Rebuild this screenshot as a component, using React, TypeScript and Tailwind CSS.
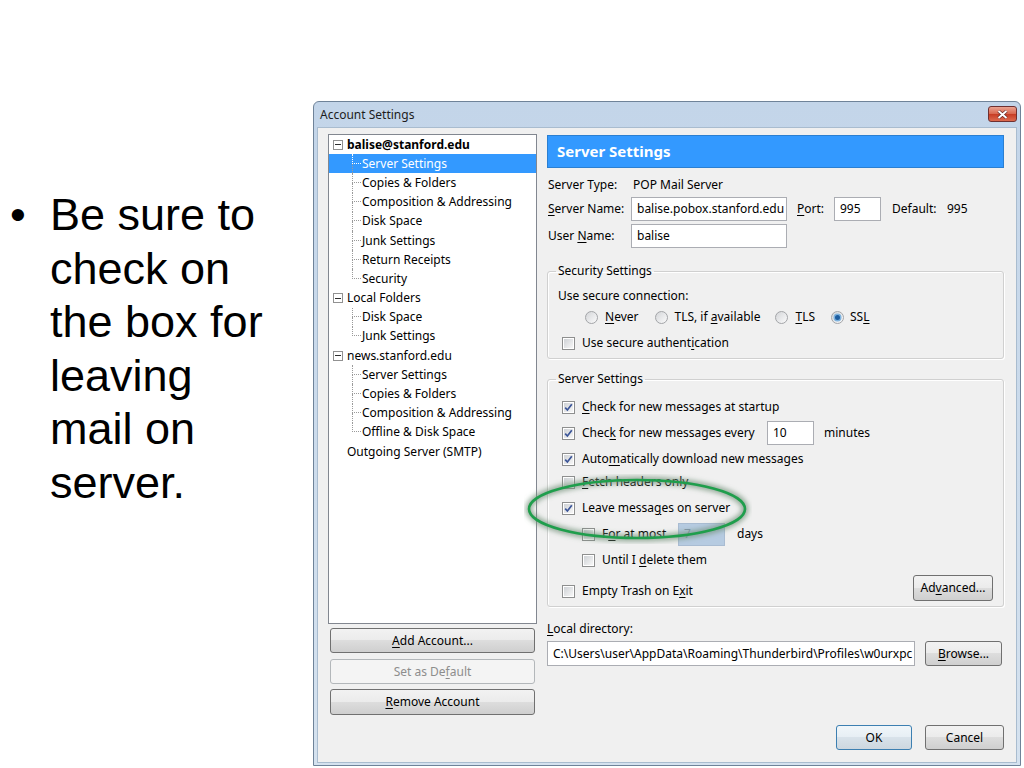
import React from "react";

type Node = { t: string; lvl: 0 | 1; box?: boolean; bold?: boolean; sel?: boolean; last?: boolean };

const tree: Node[] = [
  { t: "balise@stanford.edu", lvl: 0, box: true, bold: true },
  { t: "Server Settings", lvl: 1, sel: true },
  { t: "Copies & Folders", lvl: 1 },
  { t: "Composition & Addressing", lvl: 1 },
  { t: "Disk Space", lvl: 1 },
  { t: "Junk Settings", lvl: 1 },
  { t: "Return Receipts", lvl: 1 },
  { t: "Security", lvl: 1, last: true },
  { t: "Local Folders", lvl: 0, box: true },
  { t: "Disk Space", lvl: 1 },
  { t: "Junk Settings", lvl: 1, last: true },
  { t: "news.stanford.edu", lvl: 0, box: true },
  { t: "Server Settings", lvl: 1 },
  { t: "Copies & Folders", lvl: 1 },
  { t: "Composition & Addressing", lvl: 1 },
  { t: "Offline & Disk Space", lvl: 1, last: true },
  { t: "Outgoing Server (SMTP)", lvl: 0 },
];

function Box({ on }: { on?: boolean }) {
  return (
    <span className="w-[13px] h-[13px] shrink-0 border border-[#8e8f8f] bg-white p-[1px] flex">
      <span className="flex-1 flex items-center justify-center bg-gradient-to-br from-[#cfd2d6] to-[#f7f7f7]">
        {on && (
          <svg width="9" height="9" viewBox="0 0 9 9">
            <path d="M1.2 4.6 L3.4 7 L7.8 1.3" stroke="#3b5598" strokeWidth="1.7" fill="none" />
          </svg>
        )}
      </span>
    </span>
  );
}

function Radio({ on }: { on?: boolean }) {
  return (
    <span className="w-[13px] h-[13px] shrink-0 rounded-full border border-[#a3a5a8] bg-gradient-to-br from-[#d4d6d9] to-[#fbfbfb] flex items-center justify-center">
      {on && <span className="w-[5px] h-[5px] rounded-full bg-[#1d5d9f] ring-[1.5px] ring-[#7fb3de]" />}
    </span>
  );
}

function Btn({ children, def, disabled, className = "" }: { children: React.ReactNode; def?: boolean; disabled?: boolean; className?: string }) {
  const look = disabled
    ? "border-[#b3b7ba] bg-[#f4f4f4] text-[#8d8d8d]"
    : def
    ? "border-[#3c7fb1] bg-[linear-gradient(#f0f6fa,#e6eef4_50%,#d8e2ea_50%,#cdd7df)]"
    : "border-[#707070] bg-[linear-gradient(#f2f2f2,#ebebeb_50%,#dddddd_50%,#cfcfcf)]";
  return <div className={`flex items-center justify-center rounded-[3px] border ${look} ${className}`}>{children}</div>;
}

function Field({ children, className = "" }: { children?: React.ReactNode; className?: string }) {
  return <div className={`h-[24px] flex items-center px-[5px] border border-[#abadb3] bg-white ${className}`}>{children}</div>;
}

function U({ children }: { children: React.ReactNode }) {
  return <span className="underline decoration-1 underline-offset-[2px]">{children}</span>;
}

function TreeRow({ n }: { n: Node }) {
  return (
    <div className={`h-[19.2px] flex items-center ${n.sel ? "bg-[#3399ff] text-white" : ""}`}>
      {n.lvl === 0 ? (
        <>
          <span className="w-[14px] shrink-0 flex justify-end">
            {n.box && (
              <span className="w-[10px] h-[10px] border border-[#919191] bg-white flex items-center justify-center">
                <span className="w-[6px] h-[1px] bg-[#2e2e2e]" />
              </span>
            )}
          </span>
          <span className={`ml-[4px] ${n.bold ? "font-bold" : ""}`}>{n.t}</span>
        </>
      ) : (
        <>
          <span className="w-[23px] shrink-0" />
          <span className="w-[9px] h-full shrink-0 flex flex-col">
            <span className={`h-1/2 border-l border-b border-dotted ${n.sel ? "border-white" : "border-[#9a9a9a]"}`} />
            <span className={`h-1/2 ${n.last ? "" : "border-l border-dotted border-[#9a9a9a]"}`} />
          </span>
          <span className="ml-[1px]">{n.t}</span>
        </>
      )}
    </div>
  );
}

function CheckRow({ on, children, className = "" }: { on?: boolean; children: React.ReactNode; className?: string }) {
  return (
    <div className={`h-[20px] flex items-center gap-[7px] ${className}`}>
      <Box on={on} />
      {children}
    </div>
  );
}

export default function App() {
  return (
    <div className="relative w-[1024px] h-[768px] bg-white flex overflow-hidden">
      <div className="w-[313px] shrink-0 pt-[188px] flex font-['Liberation_Sans',Arial,sans-serif] text-[45px] leading-[53.5px] text-black">
        <span className="w-[50px] pl-[10px] shrink-0">•</span>
        <div>
          Be sure to<br />check on<br />the box for<br />leaving<br />mail on<br />server.
        </div>
      </div>

      <div className="mt-[101px] w-[708px] h-[665px] shrink-0 flex flex-col rounded-t-[6px] border border-[#6f8399] bg-gradient-to-b from-[#c3d5e9] to-[#d5e2ef] font-['Noto_Sans',sans-serif] text-[12px] text-black">
        <div className="h-[25px] shrink-0 flex items-start justify-between">
          <span className="pl-[6px] pt-[4px] text-[12px] text-[#1d1d1d]">Account Settings</span>
          <div className="mt-[4px] mr-[3px] w-[29px] h-[16px] rounded-[3px] border border-[#6f3030] bg-[linear-gradient(#eba391,#d8664d_50%,#c63b22_50%,#dc6a4f)] flex items-center justify-center">
            <svg width="11" height="9" viewBox="0 0 11 9">
              <path d="M1.5 1 L9.5 8 M9.5 1 L1.5 8" stroke="#5a2020" strokeWidth="3.2" />
              <path d="M1.5 1 L9.5 8 M9.5 1 L1.5 8" stroke="#ffffff" strokeWidth="2" />
            </svg>
          </div>
        </div>

        <div className="flex-1 mx-[3px] mb-[2px] bg-[#f0f0f0] border border-[#a9bccf] flex pl-[10px] pr-[12px] pt-[6px]">
          <div className="w-[209px] shrink-0 flex flex-col">
            <div className="h-[490px] border border-[#828790] bg-white overflow-hidden">
              {tree.map((n, i) => (
                <TreeRow key={i} n={n} />
              ))}
            </div>
            <Btn className="mt-[4px] h-[25px] mx-[2px]">
              <U>A</U>dd Account...
            </Btn>
            <Btn disabled className="mt-[6px] h-[25px] mx-[2px]">
              Set as De<U>f</U>ault
            </Btn>
            <Btn className="mt-[5px] h-[26px] mx-[2px]">
              <U>R</U>emove Account
            </Btn>
          </div>

          <div className="ml-[10px] w-[457px] flex flex-col">
            <div className="mt-[1px] h-[33px] bg-[#3399ff] border border-[#2b7fd1] flex items-center pl-[9px] text-white font-bold text-[15px]">
              Server Settings
            </div>

            <div className="mt-[7px] h-[20px] flex items-center">
              <span className="w-[86px] pl-[1px]">Server Type:</span>
              <span>POP Mail Server</span>
            </div>
            <div className="mt-[2px] h-[24px] flex items-center">
              <span className="w-[84px] pl-[1px]"><U>S</U>erver Name:</span>
              <Field className="w-[156px]">balise.pobox.stanford.edu</Field>
              <span className="ml-[10px] w-[37px]"><U>P</U>ort:</span>
              <Field className="w-[47px]">995</Field>
              <span className="ml-[11px] w-[55px]">Default:</span>
              <span>995</span>
            </div>
            <div className="mt-[3px] h-[24px] flex items-center">
              <span className="w-[84px] pl-[1px]">User <U>N</U>ame:</span>
              <Field className="w-[156px]">balise</Field>
            </div>

            <fieldset className="mt-[15px] border border-[#d0d0d0] rounded-[3px] px-[10px] pt-[8px] pb-[5px] shadow-[inset_1px_1px_0_#ffffff,1px_1px_0_#ffffff]">
              <legend className="ml-[-2px] px-[2px] leading-[16px]">Security Settings</legend>
              <div className="h-[18px] flex items-center">Use secure connection:</div>
              <div className="mt-[3px] h-[18px] flex items-center pl-[27px]">
                <span className="flex items-center gap-[7px]"><Radio /><span><U>N</U>ever</span></span>
                <span className="ml-[17px] flex items-center gap-[6px]"><Radio /><span>TLS, if <U>a</U>vailable</span></span>
                <span className="ml-[15px] flex items-center gap-[7px]"><Radio /><span><U>T</U>LS</span></span>
                <span className="ml-[16px] flex items-center gap-[6px]"><Radio on /><span>SS<U>L</U></span></span>
              </div>
              <CheckRow className="mt-[7px] ml-[4px]">
                <span>Use secure authent<U>i</U>cation</span>
              </CheckRow>
            </fieldset>

            <fieldset className="mt-[12px] border border-[#d0d0d0] rounded-[3px] pl-[14px] pr-[10px] pt-[10px] pb-[5px] shadow-[inset_1px_1px_0_#ffffff,1px_1px_0_#ffffff]">
              <legend className="ml-[-6px] px-[2px] leading-[16px]">Server Settings</legend>
              <CheckRow on>
                <span><U>C</U>heck for new messages at startup</span>
              </CheckRow>
              <div className="mt-[4px] h-[24px] flex items-center">
                <Box on />
                <span className="ml-[7px] w-[185px]">Chec<U>k</U> for new messages every</span>
                <Field className="w-[47px]">10</Field>
                <span className="ml-[10px]">minutes</span>
              </div>
              <CheckRow on className="mt-[4px]">
                <span>Auto<U>m</U>atically download new messages</span>
              </CheckRow>
              <CheckRow className="mt-[3px]">
                <span><U>F</U>etch headers only</span>
              </CheckRow>
              <CheckRow on className="mt-[6px]">
                <span>Leave messa<U>g</U>es on server</span>
              </CheckRow>
              <div className="mt-[4px] h-[24px] flex items-center pl-[20px]">
                <Box />
                <span className="ml-[7px] w-[76px]">F<U>o</U>r at most</span>
                <div className="w-[47px] h-[23px] bg-[#b6cbe1] border border-[#a9bcd2] flex items-center px-[5px] text-[#8296ac]">7</div>
                <span className="ml-[12px]">days</span>
              </div>
              <CheckRow className="mt-[4px] pl-[20px]">
                <span>Until I <U>d</U>elete them</span>
              </CheckRow>
              <div className="mt-[5px] h-[26px] flex items-center justify-between">
                <div className="mt-[6px] flex items-center gap-[7px]">
                  <Box />
                  <span>Empty Trash on E<U>x</U>it</span>
                </div>
                <Btn className="w-[80px] h-[26px]">
                  Ad<U>v</U>anced...
                </Btn>
              </div>
            </fieldset>

            <div className="mt-[13px] h-[18px] flex items-center">
              <span><U>L</U>ocal directory:</span>
            </div>
            <div className="mt-[3px] h-[25px] flex items-center">
              <Field className="w-[368px] h-[25px] overflow-hidden whitespace-nowrap px-[3px]">
                C:\Users\user\AppData\Roaming\Thunderbird\Profiles\w0urxpc
              </Field>
              <Btn className="ml-[10px] w-[77px] h-[25px]">
                <U>B</U>rowse...
              </Btn>
            </div>

            <div className="mt-[59px] flex justify-end gap-[13px]">
              <Btn def className="w-[76px] h-[25px]">OK</Btn>
              <Btn className="w-[79px] h-[25px]">Cancel</Btn>
            </div>
          </div>
        </div>
      </div>

      <svg className="absolute left-[524px] top-[474px] pointer-events-none" width="228" height="70" viewBox="0 0 228 70">
        <defs>
          <filter id="glow" x="-10%" y="-30%" width="120%" height="160%">
            <feGaussianBlur stdDeviation="2.5" />
          </filter>
        </defs>
        <ellipse cx="113" cy="35" rx="108" ry="29" fill="none" stroke="#6f8f76" strokeOpacity="0.7" strokeWidth="7" filter="url(#glow)" />
        <ellipse cx="113" cy="35" rx="108" ry="29" fill="none" stroke="#1f9e4c" strokeWidth="2.6" />
      </svg>
    </div>
  );
}
